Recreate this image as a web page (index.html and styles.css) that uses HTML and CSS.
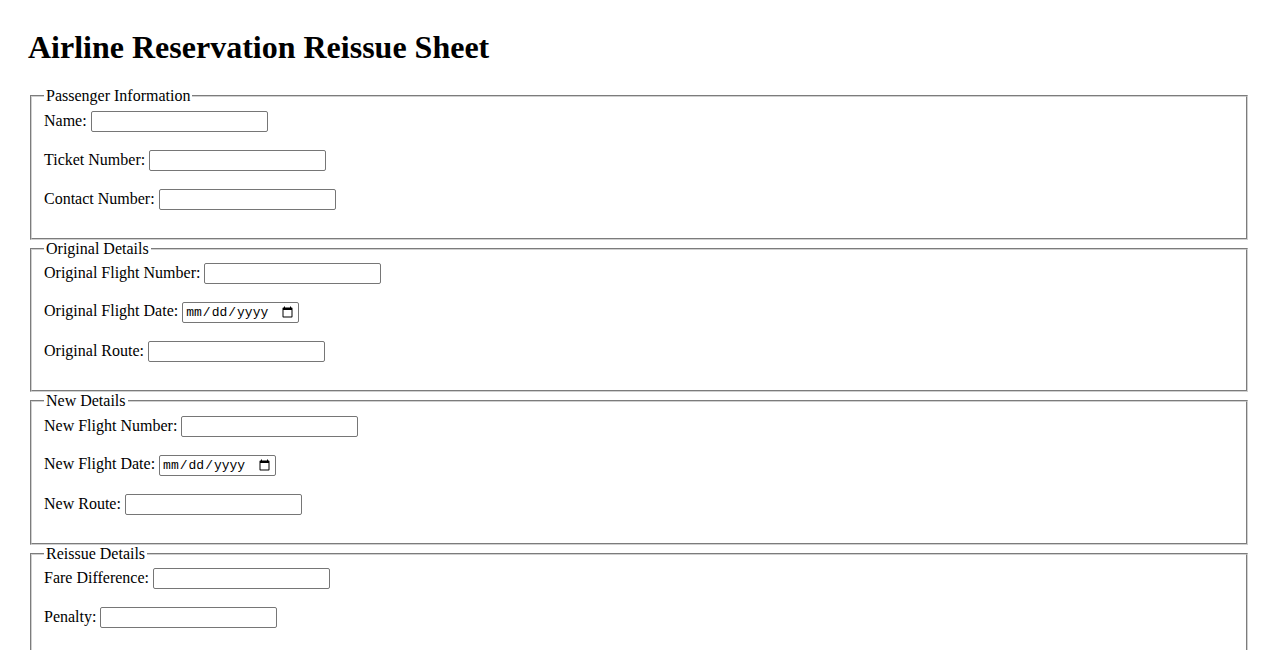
FILE: index.html
```html
<!DOCTYPE html>
<html lang="en">
<head>
<meta charset="utf-8">
<title>Airline Reservation Reissue Sheet</title>
<link rel="stylesheet" href="styles.css">
</head>
<body>
<h1 class="title">Airline Reservation Reissue Sheet</h1>
<form class="sheet">
  <fieldset class="group">
    <legend class="group-title">Passenger Information</legend>
    <label for="name">Name:</label> <input class="field" type="text" id="name"><br><br>
    <label for="ticket">Ticket Number:</label> <input class="field" type="text" id="ticket"><br><br>
    <label for="contact">Contact Number:</label> <input class="field" type="text" id="contact"><br><br>
  </fieldset>
  <fieldset class="group">
    <legend class="group-title">Original Details</legend>
    <label for="oflight">Original Flight Number:</label> <input class="field" type="text" id="oflight"><br><br>
    <label for="odate">Original Flight Date:</label> <input class="field date" type="date" id="odate"><br><br>
    <label for="oroute">Original Route:</label> <input class="field" type="text" id="oroute"><br><br>
  </fieldset>
  <fieldset class="group">
    <legend class="group-title">New Details</legend>
    <label for="nflight">New Flight Number:</label> <input class="field" type="text" id="nflight"><br><br>
    <label for="ndate">New Flight Date:</label> <input class="field date" type="date" id="ndate"><br><br>
    <label for="nroute">New Route:</label> <input class="field" type="text" id="nroute"><br><br>
  </fieldset>
  <fieldset class="group">
    <legend class="group-title">Reissue Details</legend>
    <label for="fare">Fare Difference:</label> <input class="field" type="text" id="fare"><br><br>
    <label for="penalty">Penalty:</label> <input class="field" type="text" id="penalty"><br><br>
  </fieldset>
</form>
</body>
</html>
```
FILE: styles.css
```css
html {
  overflow: hidden;
}
body {
  margin: 0;
  padding: 29px 28px;
  font-family: "Liberation Serif", "Times New Roman", serif;
  font-size: 16px;
  color: #000;
  background: #fff;
}
.title {
  font-size: 32px;
  font-weight: bold;
  margin: 0 0 21px;
}
.group {
  margin: 0 2px;
  padding: 0.35em 0.75em 0.625em;
  border: 2px groove #d0d0d0;
}
.group-title {
  padding: 0 2px;
}
.field {
  box-sizing: border-box;
  width: 177px;
  height: 21px;
  font-family: "Liberation Sans", Arial, sans-serif;
  font-size: 13.33px;
  border: 1px solid #767676;
  border-radius: 2px;
  padding: 1px 2px;
}
.field.date {
  width: 117px;
  font-family: "Liberation Mono", "DejaVu Sans Mono", monospace;
  font-size: 13px;
}
```
